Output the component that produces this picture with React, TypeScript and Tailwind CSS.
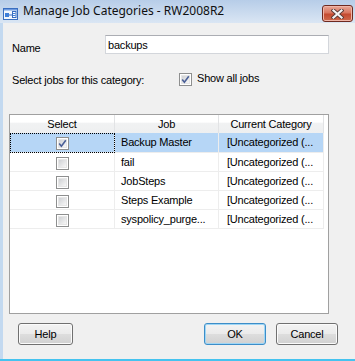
import React from "react";

function CheckBox({ checked }: { checked?: boolean }) {
  return (
    <div className="relative w-[13px] h-[13px] border border-[#8e8f8f] bg-white p-[1px] shrink-0">
      <div className="w-full h-full border border-[#e6e6e6] bg-[linear-gradient(135deg,#cfd1d4,#f7f7f7)]" />
      {checked && (
        <svg className="absolute left-0 top-0" width="11" height="11" viewBox="0 0 11 11">
          <path d="M2.2 5.4 L4.4 8.2 L8.8 2.2" fill="none" stroke="#4a5f97" strokeWidth="1.6" />
        </svg>
      )}
    </div>
  );
}

function WinButton({ label, w, def }: { label: string; w: string; def?: boolean }) {
  return (
    <div
      className={`${w} h-[22px] rounded-[3px] border flex items-center justify-center text-[11px] leading-[13px] text-black bg-[linear-gradient(to_bottom,#f3f3f3_0%,#ebebeb_48%,#dddddd_52%,#d1d1d1_100%)] ${
        def ? "border-[#3c8dc8] shadow-[inset_0_0_0_1px_#9fd6f5]" : "border-[#707070] shadow-[inset_0_0_0_1px_#fbfbfb]"
      }`}
    >
      {label}
    </div>
  );
}

export default function App() {
  const rows = [
    { job: "Backup Master", checked: true },
    { job: "fail" },
    { job: "JobSteps" },
    { job: "Steps Example" },
    { job: "syspolicy_purge..." },
  ];
  return (
    <div className="w-[355px] h-[361px] overflow-hidden flex flex-col bg-[#f0f0f0] font-['Liberation_Sans',Arial,sans-serif] text-black">
      {/* Title bar */}
      <div className="h-[23px] shrink-0 flex items-start bg-[linear-gradient(to_bottom,#b7cde8,#dae6f4)]">
        <svg className="ml-[3px] mt-[8px]" width="15" height="12" viewBox="0 0 15 12">
          <rect x="0.5" y="0.5" width="14" height="11" fill="#f4f8fd" stroke="#3a6fc0" />
          <rect x="1" y="1" width="13" height="1.5" fill="#6f9be0" />
          <rect x="2" y="5" width="4" height="4" fill="#3f7fd9" />
          <path d="M6 7 H9" stroke="#3a6fc0" />
          <rect x="9.5" y="3.5" width="3.5" height="6" fill="#fff" stroke="#3a6fc0" />
          <rect x="10" y="5" width="2.5" height="1" fill="#3f7fd9" />
          <rect x="10" y="7" width="2.5" height="1" fill="#3f7fd9" />
        </svg>
        <div className="ml-[5px] mt-[3px] font-['Noto_Sans',sans-serif] text-[12px] leading-[16px] text-[#101010]">
          Manage Job Categories - RW2008R2
        </div>
        <div className="ml-auto mr-[2px] mt-[5px] w-[31px] h-[17px] rounded-[3px] border border-[#6e2a20] bg-[linear-gradient(to_bottom,#e8a898_0%,#d9765f_45%,#c44a30_55%,#d06a4c_100%)] shadow-[inset_0_0_0_1px_#f0b6a8] flex items-center justify-center">
          <svg width="13" height="10" viewBox="0 0 13 10">
            <path d="M2.5 1.5 L10.5 8.5 M10.5 1.5 L2.5 8.5" stroke="#5a3a36" strokeWidth="4" strokeLinecap="square" />
            <path d="M2.5 1.5 L10.5 8.5 M10.5 1.5 L2.5 8.5" stroke="#f4f4f4" strokeWidth="2.2" strokeLinecap="square" />
          </svg>
        </div>
      </div>

      <div className="flex flex-1 min-h-0 tracking-[-0.2px]">
        <div className="w-[3px] shrink-0 bg-[#c3d9f0]" />
        <div className="flex-1 flex flex-col">
          {/* Name row */}
          <div className="flex mt-[12px] pl-[9px]">
            <div className="w-[93px] mt-[7px] text-[11px] leading-[13px]">Name</div>
            <div className="w-[224px] h-[19px] bg-white border border-[#d3d6db] border-t-[#abadb3] pl-[2px] pt-[2px] text-[11px] leading-[15px]">
              backups
            </div>
          </div>
          {/* Select jobs row */}
          <div className="flex items-start mt-[18px] pl-[9px] h-[13px]">
            <div className="w-[167px] mt-[1px] text-[11px] leading-[13px]">Select jobs for this category:</div>
            <CheckBox checked />
            <div className="ml-[5px] -mt-[1px] text-[11px] leading-[13px]">Show all jobs</div>
          </div>
          {/* Grid */}
          <div className="mt-[28px] ml-[6px] w-[320px] h-[200px] border border-[#a0a0a0] bg-white text-[11px]">
            <div className="flex h-[18px] w-[314px] bg-[linear-gradient(to_bottom,#ffffff_0%,#ffffff_40%,#f1f2f3_45%,#eeeff0_100%)] leading-[18px]">
              <div className="w-[105px] border-r border-[#e2e3e5] text-center">Select</div>
              <div className="w-[104px] border-r border-[#e2e3e5] text-center">Job</div>
              <div className="w-[105px] border-r border-[#e2e3e5] text-center">Current Category</div>
            </div>
            {rows.map((r, i) => (
              <div
                key={i}
                className={`flex w-[314px] border-b border-[#ededed] ${i === 0 ? "h-[20px] bg-[#b6d6f6] leading-[19px]" : "h-[19px] leading-[18px]"}`}
              >
                <div className="relative w-[105px] border-r border-[#ededed] flex items-center justify-center">
                  <div className="mt-[2px]">
                    <CheckBox checked={r.checked} />
                  </div>
                  {i === 0 && (
                    <div className="absolute left-0 top-0 right-[-1px] bottom-[-1px] border border-dotted border-black" />
                  )}
                </div>
                <div className="w-[104px] border-r border-[#ededed] pl-[6px] whitespace-nowrap overflow-hidden">{r.job}</div>
                <div className="w-[105px] border-r border-[#ededed] pl-[8px] whitespace-nowrap overflow-hidden">
                  [Uncategorized (...
                </div>
              </div>
            ))}
          </div>
          {/* Buttons */}
          <div className="flex mt-[9px] pl-[15px] pr-[17px]">
            <WinButton label="Help" w="w-[55px]" />
            <div className="flex-1" />
            <WinButton label="OK" w="w-[62px]" def />
            <div className="w-[10px]" />
            <WinButton label="Cancel" w="w-[62px]" />
          </div>
        </div>
      </div>
      <div className="h-[2px] shrink-0 bg-[#45c3ef]" />
    </div>
  );
}
